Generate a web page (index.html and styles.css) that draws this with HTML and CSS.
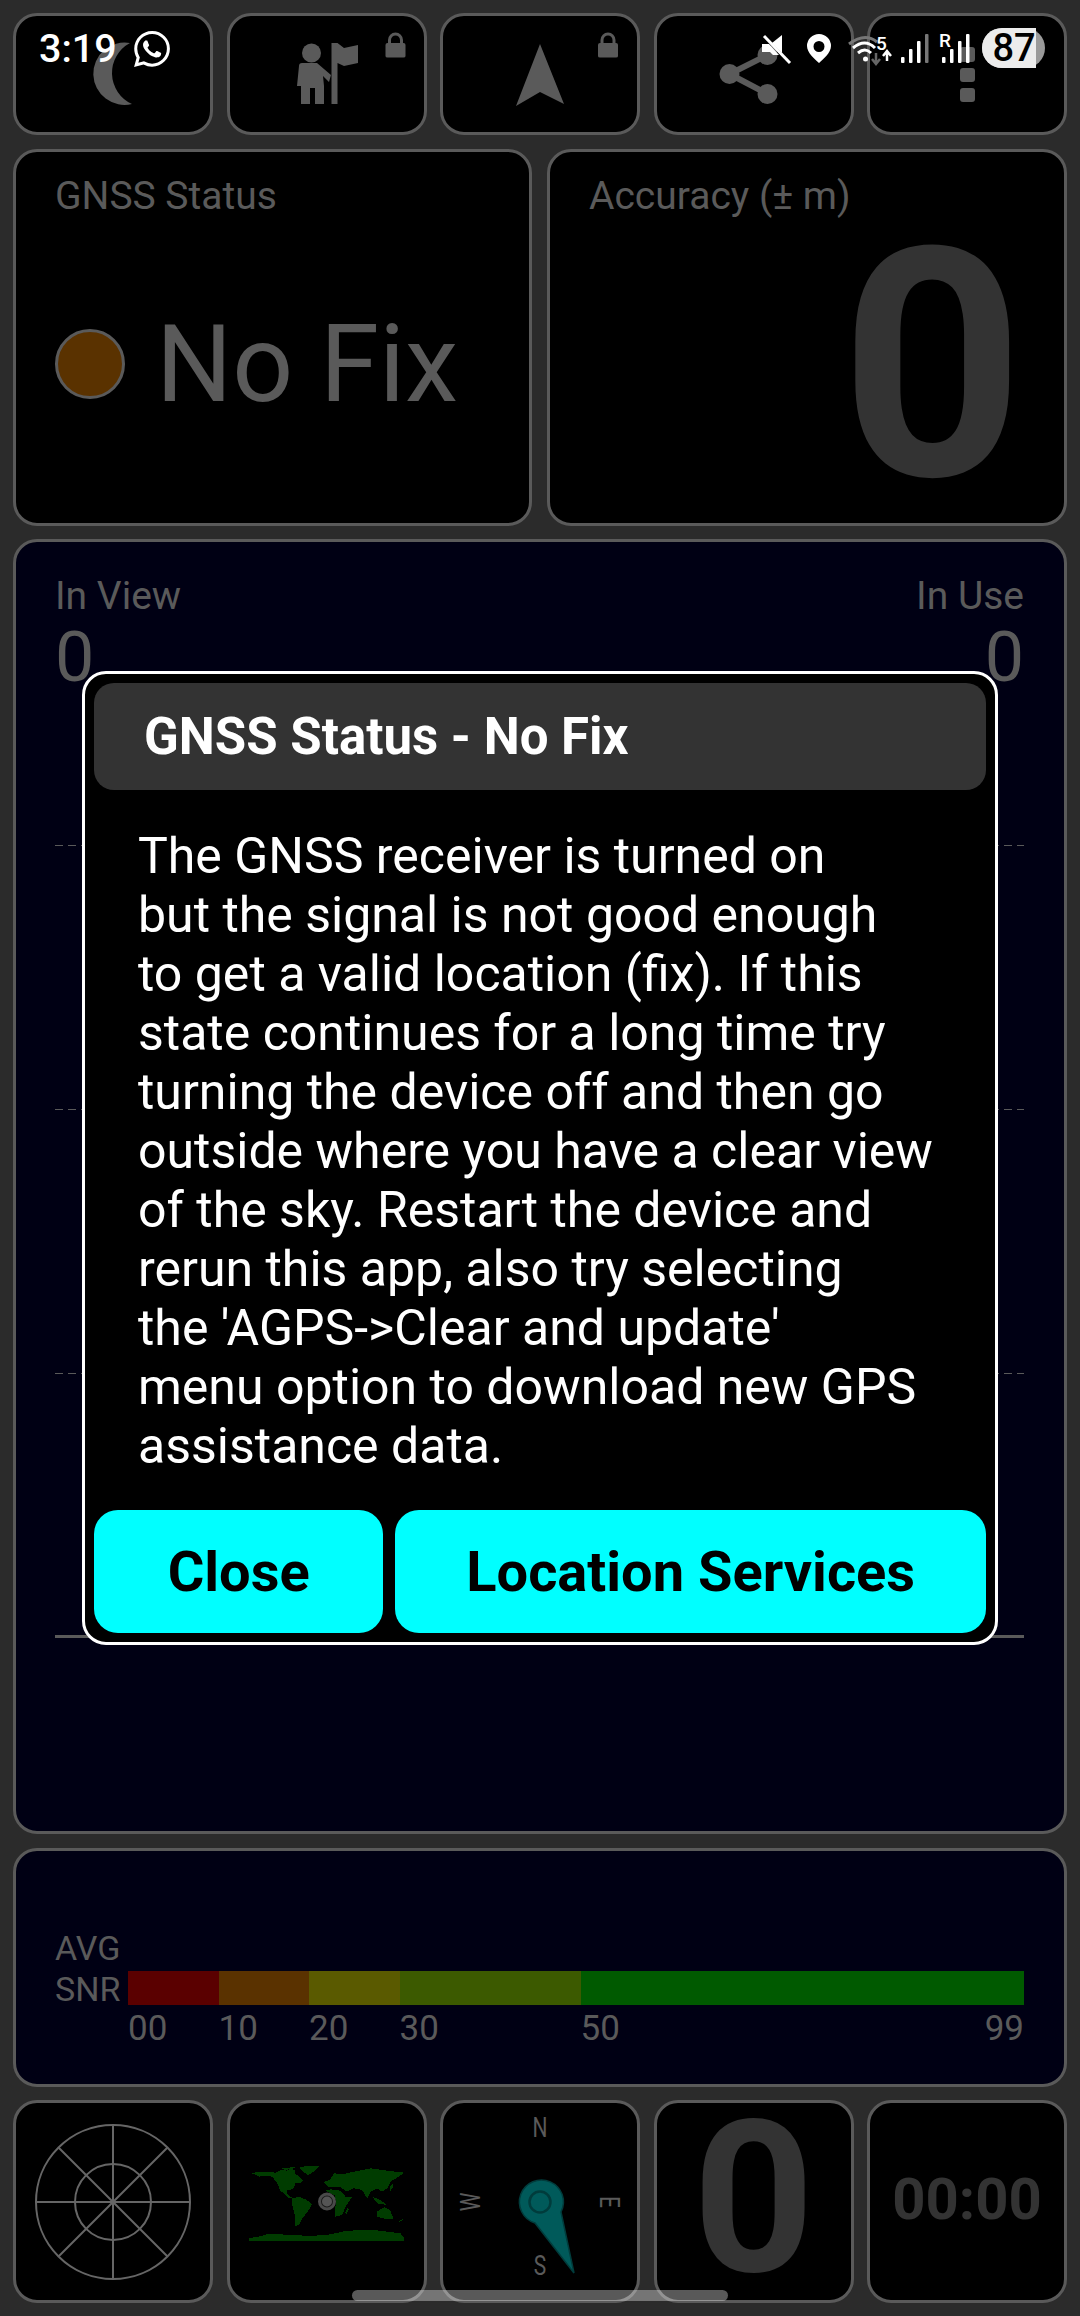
FILE: index.html
```html
<!DOCTYPE html>
<html lang="en">
  <head>
    <meta charset="UTF-8" />
    <meta name="viewport" content="width=device-width, initial-scale=1.0" />
    <title>GNSS Status</title>
    <link rel="stylesheet" href="styles.css">
  </head>
  <body>
    <div class="screen">
      <div class="row row-top">
        <div class="tile">
          <svg viewBox="3 3 194 116"><path class="ico" d="M117 30A31.2 31.2 0 1 0 119 91A34 34 0 0 1 117 30Z"/></svg>
        </div>
        <div class="tile">
          <svg viewBox="3 3 194 116">
            <circle class="ico" cx="84.5" cy="40" r="9.5"/>
            <path class="ico" d="M70 73L72 53Q72 50 75 50L90 50L104 62L102 69L96 63L97 73L97 91L88 91L88 75L83 75L83 91L74 91L74 73Z"/>
            <path class="ico" d="M104.5 30H110.5L117 35L131 32V50L117 53L110.5 50V91H104.5Z"/>
            <path class="ico" d="M158.5 32Q158.500 30 160.500 30H176.500Q178.500 30 178.500 32V43Q178.500 44.500 176.500 44.500H160.500Q158.500 44.500 158.500 43Z"/>
            <path class="ico-line thin" d="M162.500 31V27A6 6 0 0 1 174.500 27V31"/>
          </svg>
        </div>
        <div class="tile">
          <svg viewBox="3 3 194 116">
            <path class="ico" d="M100 31L124 91L100 79L76 93Z"/>
            <path class="ico" d="M158 32Q158 30 160 30H176Q178 30 178 32V43Q178 44.500 176 44.500H160Q158 44.500 158 43Z"/>
            <path class="ico-line thin" d="M162 31V27A6 6 0 0 1 174 27V31"/>
          </svg>
        </div>
        <div class="tile">
          <svg viewBox="3 3 194 116">
            <path class="ico-line" d="M113.500 42L75.500 61L113.500 81"/>
            <circle class="ico" cx="75.500" cy="61" r="10"/>
            <circle class="ico" cx="113.500" cy="42" r="10"/>
            <circle class="ico" cx="113.500" cy="81" r="10"/>
          </svg>
        </div>
        <div class="tile">
          <svg viewBox="3 3 194 116">
            <rect class="ico" x="93" y="34" width="15" height="15" rx="3"/>
            <rect class="ico" x="93" y="55" width="15" height="14" rx="3"/>
            <rect class="ico" x="93" y="75" width="15" height="14" rx="3"/>
          </svg>
        </div>
      </div>

      <div class="row row-status">
        <div class="card">
          <div class="label">GNSS Status</div>
          <div class="fix">
            <span class="fix-dot"></span>
            <span class="fix-text">No Fix</span>
          </div>
        </div>
        <div class="card">
          <div class="label">Accuracy (± m)</div>
          <div class="accuracy">0</div>
        </div>
      </div>

      <div class="card card-navy sats">
        <div class="sats-head">
          <div>
            <div class="label">In View</div>
            <div class="count">0</div>
          </div>
          <div class="align-right">
            <div class="label">In Use</div>
            <div class="count">0</div>
          </div>
        </div>
        <div class="chart">
          <div class="chart-step"><i class="dash"></i></div>
          <div class="chart-step"><i class="dash"></i></div>
          <div class="chart-step"><i class="dash"></i></div>
          <div class="chart-step"><i class="axis"></i></div>
        </div>
      </div>

      <div class="card card-navy snr">
        <div class="snr-side">
          <div>AVG</div>
          <div>SNR</div>
        </div>
        <div class="snr-scale">
          <div class="snr-col col-10"><i class="c-red"></i><span>00</span></div>
          <div class="snr-col col-10"><i class="c-orange"></i><span>10</span></div>
          <div class="snr-col col-10"><i class="c-yellow"></i><span>20</span></div>
          <div class="snr-col col-20"><i class="c-lime"></i><span>30</span></div>
          <div class="snr-col col-49"><i class="c-green"></i><span class="two"><b>50</b><b>99</b></span></div>
        </div>
      </div>

      <div class="row row-bottom">
        <div class="tile">
          <svg viewBox="3 3 194 197">
            <g class="polar">
              <circle cx="100" cy="102" r="77"/>
              <circle cx="100" cy="102" r="38"/>
              <path d="M23 102H177M100 25V179M45.500 47.500L154.500 156.500M154.500 47.500L45.500 156.500"/>
            </g>
          </svg>
        </div>
        <div class="tile">
          <svg viewBox="3 3 194 197">
            <g transform="translate(3.5 50) scale(.3333)" class="land" shape-rendering="crispEdges">
              <path d="M55 68L72 70L78 65L108 65L135 68L150 60L170 62L180 55L195 62L192 72L205 78L218 92L207 100L195 100L190 115L178 120L168 122L172 135L185 143L178 146L165 135L150 122L140 100L125 80L105 78L85 80L72 72Z"/>
              <path d="M205 50L268 48L250 65L232 76L215 62Z"/>
              <path d="M150 56L200 50L190 55L165 60Z"/>
              <path d="M186 145L205 140L225 148L245 162L232 185L215 205L205 225L195 228L192 190L185 165Z"/>
              <path d="M280 96L300 88L310 70L340 72L370 65L420 55L470 62L522 68L505 80L480 95L470 115L455 125L440 115L420 125L410 145L395 120L370 115L350 125L330 112L295 112Z"/>
              <path d="M285 122L300 118L330 122L345 140L366 140L345 170L335 195L315 200L312 178L318 160L312 135Z"/>
              <path d="M438 185L462 172L478 180L490 205L470 208L440 200Z"/>
              <path d="M350 175L356 178L348 192L344 188ZM505 215L518 205L516 209L506 218ZM425 140L450 150L470 165L440 160ZM478 110L486 100L488 112L480 122Z"/>
              <path d="M55 265L95 258L110 252L200 255L230 258L290 255L350 242L430 240L510 250L522 265V272H55Z"/>
            </g>
            <circle class="ring" cx="100" cy="101.500" r="7.500"/>
            <circle cx="100" cy="101.500" r="5" fill="#555"/>
          </svg>
        </div>
        <div class="tile">
          <svg viewBox="3 3 194 197">
            <text class="compass" transform="translate(100 37) scale(.75 1)" text-anchor="middle">N</text>
            <text class="compass" transform="translate(100 175) scale(.75 1)" text-anchor="middle">S</text>
            <text class="compass" transform="translate(160 102) rotate(90) scale(.75 1)" text-anchor="middle">E</text>
            <text class="compass" transform="translate(40 102) rotate(-90) scale(.75 1)" text-anchor="middle">W</text>
            <path class="needle" d="M121 112L134 173L95 123A22 22 0 1 1 121 112Z"/>
            <circle class="needle-eye" cx="100" cy="102" r="10.500"/>
          </svg>
        </div>
        <div class="tile tile-num"><span class="gauge">0</span></div>
        <div class="tile tile-num"><span class="clock">00:00</span></div>
      </div>
    </div>

    <!-- phone status bar, lies over the top tiles -->
    <div class="statusbar">
      <span class="time">3:19</span>
      <svg class="wa" viewBox="0 0 24 24"><path d="M17.472 14.382c-.297-.149-1.758-.867-2.03-.967-.273-.099-.471-.148-.67.15-.197.297-.767.966-.94 1.164-.173.199-.347.223-.644.075-.297-.15-1.255-.463-2.39-1.475-.883-.788-1.48-1.761-1.653-2.059-.173-.297-.018-.458.13-.606.134-.133.298-.347.446-.52.149-.174.198-.298.298-.497.099-.198.05-.371-.025-.52-.075-.149-.669-1.612-.916-2.207-.242-.579-.487-.5-.669-.51-.173-.008-.371-.01-.57-.01-.198 0-.52.074-.792.372-.272.297-1.04 1.016-1.04 2.479 0 1.462 1.065 2.875 1.213 3.074.149.198 2.096 3.2 5.077 4.487.709.306 1.262.489 1.694.625.712.227 1.36.195 1.871.118.571-.085 1.758-.719 2.006-1.413.248-.694.248-1.289.173-1.413-.074-.124-.272-.198-.57-.347m-5.421 7.403h-.004a9.87 9.87 0 01-5.031-1.378l-.361-.214-3.741.982.998-3.648-.235-.374a9.86 9.86 0 01-1.51-5.26c.001-5.45 4.436-9.884 9.888-9.884 2.64 0 5.122 1.03 6.988 2.898a9.825 9.825 0 012.893 6.994c-.003 5.45-4.437 9.884-9.885 9.884m8.413-18.297A11.815 11.815 0 0012.05 0C5.495 0 .16 5.335.157 11.892c0 2.096.547 4.142 1.588 5.945L.057 24l6.305-1.654a11.882 11.882 0 005.683 1.448h.005c6.554 0 11.89-5.335 11.893-11.893a11.821 11.821 0 00-3.48-8.413z"/></svg>
      <svg class="sys" viewBox="755 25 295 45">
        <!-- mute -->
        <path class="w" d="M782 35V53L772 43Z"/>
        <path class="w" d="M762 44H769L779 55H773L770 52H762Z"/>
        <path class="slash" d="M764 36L790 63"/>
        <!-- location pin -->
        <path class="w" fill-rule="evenodd" d="M819 34A12 12 0 0 1 831 46C831 53 823 59 819 63C815 59 807 53 807 46A12 12 0 0 1 819 34ZM819 41A5.500 5.500 0 1 0 819 52A5.500 5.500 0 0 0 819 41Z"/>
        <!-- wifi -->
        <path class="arc faint" d="M849 44Q865 32 877 42"/>
        <path class="arc" d="M853 48Q865 38 875 48"/>
        <path class="arc" d="M858 53Q865 47 871 53"/>
        <circle class="w" cx="865.500" cy="59" r="2.500"/>
        <text class="sb-small" x="876" y="50">5</text>
        <path class="arrow dim" d="M876 53V63M872 59L876 64L880 59"/>
        <path class="arrow" d="M887 61V52M883 56L887 51L891 56"/>
        <!-- signal 1 -->
        <rect class="w" x="901" y="57" width="3.500" height="6" rx="1"/>
        <rect class="w" x="909" y="49" width="3.500" height="14" rx="1"/>
        <rect class="w" x="917" y="41" width="3.500" height="22" rx="1"/>
        <rect class="dimbar" x="925" y="34" width="3.500" height="29" rx="1"/>
        <!-- signal 2 -->
        <text class="sb-small" x="939" y="47">R</text>
        <rect class="w" x="942" y="57" width="3.500" height="6" rx="1"/>
        <rect class="w" x="950" y="49" width="3.500" height="14" rx="1"/>
        <rect class="w" x="958" y="41" width="3.500" height="22" rx="1"/>
        <rect class="w" x="966" y="34" width="3.500" height="29" rx="1"/>
        <!-- battery -->
        <rect x="982" y="28" width="63" height="40" rx="20" fill="#9a9a9a"/>
        <path d="M1002 28H1036V68H1002A20 20 0 0 1 1002 28Z" fill="#ececec"/>
        <text class="sb-batt" x="1014" y="61" text-anchor="middle">87</text>
      </svg>
    </div>

    <!-- help dialog on top of the screen -->
    <div class="dialog">
      <div class="dialog-title">GNSS Status - No Fix</div>
      <p class="dialog-body">The GNSS receiver is turned on<br>but the signal is not good enough<br>to get a valid location (fix). If this<br>state continues for a long time try<br>turning the device off and then go<br>outside where you have a clear view<br>of the sky. Restart the device and<br>rerun this app, also try selecting<br>the 'AGPS-&gt;Clear and update'<br>menu option to download new GPS<br>assistance data.</p>
      <div class="dialog-buttons">
        <button class="btn btn-close">Close</button>
        <button class="btn btn-wide">Location Services</button>
      </div>
    </div>

    <div class="home-bar"></div>
  </body>
</html>
```

FILE: styles.css
```css
* {
  box-sizing: border-box;
}
html,
body {
  margin: 0;
  height: 2316px;
  overflow: hidden;
}
body {
  position: relative;
  width: 1080px;
  background: #2b2b2b;
  color: #5a5a5a;
  font-family: "Roboto", Arial, sans-serif;
}
.screen {
  display: flex;
  flex-direction: column;
  gap: 13.5px;
  padding: 13px;
}
.row {
  display: grid;
  gap: 13.5px;
}
.row-top {
  grid-template-columns: repeat(5, 200px);
  height: 122px;
}
.row-status {
  grid-template-columns: 519px 520px;
  grid-template-rows: 377px;
  gap: 15px;
  height: 377px;
}
.row-bottom {
  grid-template-columns: repeat(5, 200px);
  grid-template-rows: 203px;
  height: 203px;
}
.tile,
.card {
  background: #000;
  border: 3px solid #5a5a5a;
  border-radius: 24px;
}
.tile svg {
  display: block;
  width: 100%;
  height: 100%;
}
.ico {
  fill: #5a5a5a;
}
.ico-line {
  fill: none;
  stroke: #5a5a5a;
  stroke-width: 6;
}
.ico-line.thin {
  stroke-width: 3;
}
.card {
  padding: 23px 40px 0 39px;
}
.card-navy {
  background: #000014;
}
.label {
  font-size: 39px;
  line-height: 42px;
}

/* fix status */
.fix {
  display: flex;
  align-items: center;
  gap: 31px;
  margin-top: 85px;
}
.fix-dot {
  width: 70px;
  height: 70px;
  background: #5a3200;
  border: 3px solid #5a5a5a;
  border-radius: 50%;
}
.fix-text {
  font-size: 107px;
  line-height: 125px;
}
.accuracy {
  margin-top: -1px;
  color: #333;
  font-size: 320px;
  font-weight: 700;
  line-height: 300px;
  text-align: right;
}

/* satellites chart */
.sats {
  height: 1295px;
  padding-top: 33px;
}
.sats-head {
  display: flex;
  justify-content: space-between;
}
.align-right {
  text-align: right;
}
.count {
  margin-top: 3px;
  font-size: 70px;
  line-height: 74px;
}
.chart {
  margin-top: -112px;
}
.chart-step {
  display: flex;
  align-items: flex-end;
  height: 264px;
}
.dash {
  display: block;
  width: 100%;
  height: 1px;
  background: repeating-linear-gradient(90deg, #5a5a5a 0 8px, transparent 8px 13px);
}
.axis {
  display: block;
  width: 100%;
  height: 3px;
  background: #5a5a5a;
}

/* snr bar */
.snr {
  display: flex;
  height: 239px;
  padding-top: 120px;
}
.snr-side {
  width: 73px;
  font-size: 34px;
  line-height: 41px;
  margin-top: -43px;
}
.snr-scale {
  flex: 1;
  display: flex;
}
.snr-col i {
  display: block;
  height: 34px;
}
.snr-col span {
  display: block;
  margin-top: 5px;
  font-size: 35px;
  line-height: 38px;
}
.snr-col b {
  font-weight: 400;
}
.snr-col .two {
  display: flex;
  justify-content: space-between;
}
.col-10 {
  flex: 10;
}
.col-20 {
  flex: 20;
}
.col-49 {
  flex: 49;
}
.c-red {
  background: #5a0000;
}
.c-orange {
  background: #5a3200;
}
.c-yellow {
  background: #5a5a00;
}
.c-lime {
  background: #3c5a00;
}
.c-green {
  background: #005a00;
}

/* bottom tiles */
.polar circle,
.polar path {
  fill: none;
  stroke: #666;
  stroke-width: 2;
}
.land {
  fill: #003c00;
}
.ring {
  fill: #1c1c1c;
  stroke: #4a4a4a;
  stroke-width: 3;
}
.compass {
  fill: #5a5a5a;
  font-family: "Roboto", Arial, sans-serif;
  font-size: 28px;
}
.needle {
  fill: #005a5a;
  stroke: #003c3c;
  stroke-width: 1.500;
}
.needle-eye {
  fill: none;
  stroke: #003c3c;
  stroke-width: 2.500;
}
.tile-num {
  display: flex;
  align-items: center;
  justify-content: center;
  padding-bottom: 5px;
  color: #333;
  font-weight: 700;
}
.gauge {
  font-size: 212px;
  line-height: 190px;
}
.clock {
  font-size: 58px;
  line-height: 1;
}

/* phone status bar */
.statusbar {
  position: absolute;
  top: 25px;
  left: 0;
  width: 1080px;
  height: 45px;
  color: #fff;
}
.time {
  position: absolute;
  left: 39px;
  top: 1px;
  font-size: 39.500px;
  font-weight: 500;
  line-height: 46px;
}
.wa {
  position: absolute;
  left: 134px;
  top: 6px;
  width: 36px;
  height: 36px;
  fill: #fff;
}
.sys {
  position: absolute;
  left: 755px;
  top: 0;
  width: 295px;
  height: 45px;
}
.w {
  fill: #fff;
}
.slash {
  stroke: #fff;
  stroke-width: 3;
}
.arc {
  fill: none;
  stroke: #fff;
  stroke-width: 3;
}
.arc.faint {
  stroke: #777;
}
.arrow {
  fill: none;
  stroke: #fff;
  stroke-width: 2.500;
}
.arrow.dim {
  stroke: #666;
}
.dimbar {
  fill: #777;
}
.sb-small {
  fill: #fff;
  font-family: "Roboto", Arial, sans-serif;
  font-size: 19px;
  font-weight: 500;
}
.sb-batt {
  fill: #000;
  font-family: "Roboto", Arial, sans-serif;
  font-size: 38px;
  font-weight: 500;
}

/* dialog */
.dialog {
  position: absolute;
  left: 82px;
  top: 671px;
  width: 916px;
  height: 974px;
  padding: 9px;
  background: #000;
  border: 3px solid #fff;
  border-radius: 24px;
}
.dialog-title {
  height: 107px;
  padding-left: 50px;
  background: #333;
  border-radius: 20px;
  color: #fff;
  font-size: 51px;
  font-weight: 700;
  line-height: 107px;
}
.dialog-body {
  margin: 37px 0 0 44px;
  color: #fff;
  font-size: 50px;
  line-height: 59px;
}
.dialog-buttons {
  display: flex;
  gap: 12px;
  margin-top: 34px;
}
.btn {
  height: 123px;
  padding: 0;
  border: none;
  border-radius: 24px;
  background: #0ff;
  color: #000;
  font-family: "Roboto", Arial, sans-serif;
  font-size: 56px;
  font-weight: 700;
}
.btn-close {
  width: 290px;
}
.btn-wide {
  width: 592px;
}
.home-bar {
  position: absolute;
  left: 352px;
  top: 2290px;
  width: 376px;
  height: 11px;
  border-radius: 6px;
  background: rgba(255, 255, 255, 0.35);
}
```
